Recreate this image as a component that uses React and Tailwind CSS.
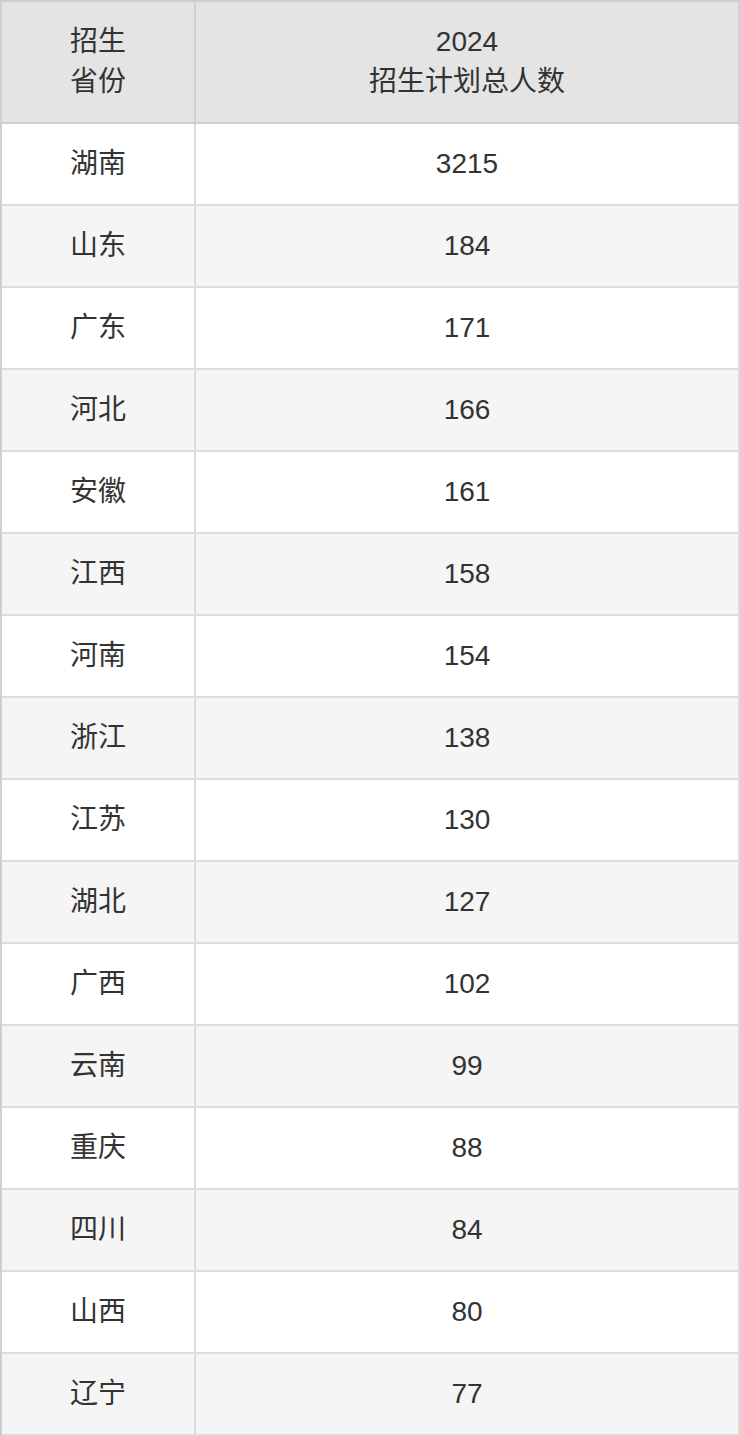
import React from "react";

const rows = [
  ["湖南", "3215"],
  ["山东", "184"],
  ["广东", "171"],
  ["河北", "166"],
  ["安徽", "161"],
  ["江西", "158"],
  ["河南", "154"],
  ["浙江", "138"],
  ["江苏", "130"],
  ["湖北", "127"],
  ["广西", "102"],
  ["云南", "99"],
  ["重庆", "88"],
  ["四川", "84"],
  ["山西", "80"],
  ["辽宁", "77"],
];

export default function App() {
  return (
    <div
      className="w-[740px] bg-white text-[#333333] text-[28px] leading-[40px]"
      style={{ fontFamily: '"Liberation Sans", "Noto Sans CJK SC", sans-serif' }}
    >
      <div className="border-l-2 border-t-2 border-[#cfcfcf]">
        {/* header */}
        <div className="flex bg-[#e4e4e4]">
          <div className="w-[194px] h-[122px] flex flex-col items-center justify-center border-r-2 border-b-2 border-[#cfcfcf] text-center">
            <span>招生</span>
            <span>省份</span>
          </div>
          <div className="flex-1 h-[122px] flex flex-col items-center justify-center border-r-2 border-b-2 border-[#cfcfcf] text-center">
            <span>2024</span>
            <span>招生计划总人数</span>
          </div>
        </div>

        {rows.map(([prov, num], i) => (
          <div key={prov} className={`flex ${i % 2 === 1 ? "bg-[#f5f5f5]" : "bg-white"}`}>
            <div className="w-[194px] h-[82px] flex items-center justify-center border-r-2 border-b-2 border-[#dddddd]">
              {prov}
            </div>
            <div className="flex-1 h-[82px] flex items-center justify-center border-r-2 border-b-2 border-[#dddddd]">
              {num}
            </div>
          </div>
        ))}
      </div>
    </div>
  );
}
